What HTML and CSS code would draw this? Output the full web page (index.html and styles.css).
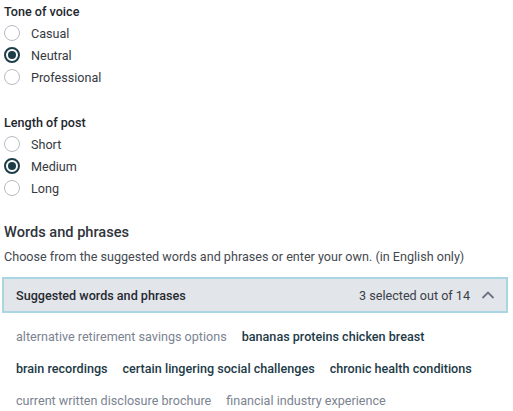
FILE: index.html
```html
<!DOCTYPE html>
<html lang="en">
<head>
    <meta charset="UTF-8">
    <meta name="viewport" content="width=device-width, initial-scale=1.0">
    <title>Post settings</title>
    <link rel="stylesheet" href="styles.css">
</head>
<body>
    <div class="settings">
        <fieldset class="option-group">
            <legend>Tone of voice</legend>
            <label class="radio"><input type="radio" name="tone"><span class="dot"></span>Casual</label>
            <label class="radio"><input type="radio" name="tone" checked><span class="dot"></span>Neutral</label>
            <label class="radio"><input type="radio" name="tone"><span class="dot"></span>Professional</label>
        </fieldset>

        <fieldset class="option-group last">
            <legend>Length of post</legend>
            <label class="radio"><input type="radio" name="length"><span class="dot"></span>Short</label>
            <label class="radio"><input type="radio" name="length" checked><span class="dot"></span>Medium</label>
            <label class="radio"><input type="radio" name="length"><span class="dot"></span>Long</label>
        </fieldset>

        <div class="phrases">
            <h2>Words and phrases</h2>
            <p class="hint">Choose from the suggested words and phrases or enter your own. (in English only)</p>

            <div class="suggest-bar">
                <span class="suggest-title">Suggested words and phrases</span>
                <span class="suggest-count">3 selected out of 14</span>
                <svg class="chevron" width="16" height="16" viewBox="0 0 16 16">
                    <path d="M2.5 11 L8 5.5 L13.5 11" fill="none" stroke="#6b7280" stroke-width="1.8"/>
                </svg>
            </div>

            <div class="chips">
                <span class="chip">alternative retirement savings options</span>
                <span class="chip selected">bananas proteins chicken breast</span>
                <span class="chip selected">brain recordings</span>
                <span class="chip selected">certain lingering social challenges</span>
                <span class="chip selected">chronic health conditions</span>
                <span class="chip">current written disclosure brochure</span>
                <span class="chip">financial industry experience</span>
            </div>
        </div>
    </div>
</body>
</html>
```

FILE: styles.css
```css
* {
    margin: 0;
    padding: 0;
    box-sizing: border-box;
}

body {
    font-family: Roboto, 'Liberation Sans', sans-serif;
    color: #2f333a;
    background: #fff;
    font-size: 12.6px;
}

.settings {
    padding: 4px 4px 0 4px;
}

.option-group {
    border: none;
    display: flex;
    flex-direction: column;
    margin-bottom: 27px;
}

.option-group.last {
    margin-bottom: 24px;
}

.option-group legend {
    font-size: 12.6px;
    font-weight: 500;
    color: #23272e;
    line-height: 16px;
    margin-bottom: 2px;
}

.radio {
    display: flex;
    align-items: center;
    gap: 11px;
    height: 22px;
    color: #353a42;
    cursor: pointer;
}

.radio input {
    display: none;
}

.dot {
    width: 16px;
    height: 16px;
    border: 1px solid #b7bbc1;
    border-radius: 50%;
    display: flex;
    align-items: center;
    justify-content: center;
}

.radio input:checked + .dot {
    border: 2px solid #1c3d48;
}

.radio input:checked + .dot::after {
    content: '';
    width: 8px;
    height: 8px;
    border-radius: 50%;
    background: #1c3d48;
}

.phrases h2 {
    font-size: 14.6px;
    font-weight: 500;
    color: #30343b;
    line-height: 18px;
    margin-bottom: 8px;
}

.hint {
    color: #444950;
    line-height: 16px;
    margin-bottom: 12px;
}

.suggest-bar {
    display: flex;
    align-items: center;
    height: 36px;
    margin: 0 1px 0 -2px;
    padding: 0 10px 0 12px;
    background: #e2e5ea;
    border: 2px solid #a9d6e2;
}

.suggest-title {
    font-weight: 500;
    color: #262a31;
    flex: 1;
}

.suggest-count {
    color: #3b4048;
    margin-right: 10px;
}

.chips {
    display: flex;
    flex-wrap: wrap;
    column-gap: 15px;
    padding: 8px 12px 0 12px;
}

.chip {
    line-height: 32px;
    color: #7b8391;
}

.chip.selected {
    color: #1d3b47;
    font-weight: 500;
}
```
